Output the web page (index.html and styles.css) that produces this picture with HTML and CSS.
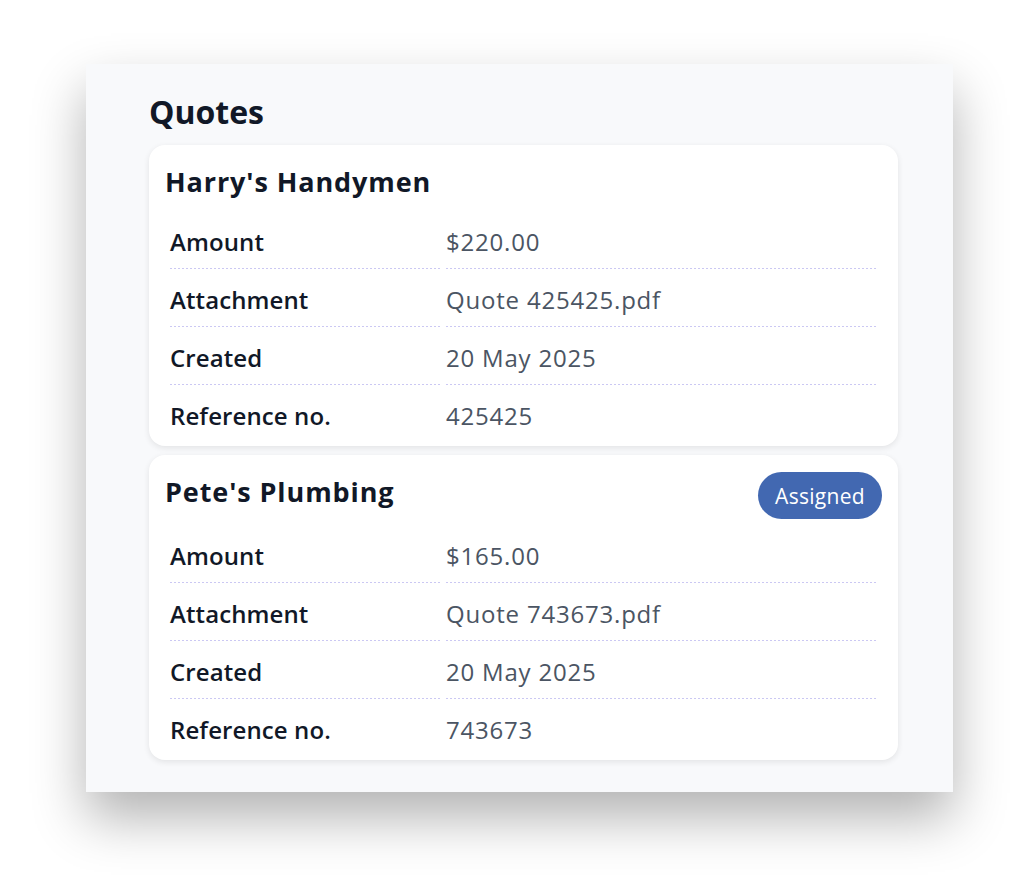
FILE: index.html
```
<!DOCTYPE html>
<html>
<head>
	<meta charset="utf-8">
	<title>Quotes</title>
	<link rel="stylesheet" href="styles.css">
</head>
<body>
	<div class="panel">
		<h2 class="page-title">Quotes</h2>
		<div class="quote-card">
			<div class="quote-head">
				<h3 class="quote-name">Harry's Handymen</h3>
			</div>
			<dl class="quote-rows">
				<dt>Amount</dt><dd>$220.00</dd>
				<dt>Attachment</dt><dd>Quote 425425.pdf</dd>
				<dt>Created</dt><dd>20 May 2025</dd>
				<dt class="last">Reference no.</dt><dd class="last">425425</dd>
			</dl>
		</div>
		<div class="quote-card">
			<div class="quote-head">
				<h3 class="quote-name">Pete's Plumbing</h3>
				<span class="badge">Assigned</span>
			</div>
			<dl class="quote-rows">
				<dt>Amount</dt><dd>$165.00</dd>
				<dt>Attachment</dt><dd>Quote 743673.pdf</dd>
				<dt>Created</dt><dd>20 May 2025</dd>
				<dt class="last">Reference no.</dt><dd class="last">743673</dd>
			</dl>
		</div>
	</div>
</body>
</html>
```

FILE: styles.css
```
*{margin: 0;padding: 0;box-sizing: border-box;}
html, body{ background: #fff; min-height: 879px; }
body{ padding: 64px 0 87px 86px; font-family: "Open Sans", "Liberation Sans", sans-serif; color: #111827; }
.panel{ width: 867px; height: 728px; padding: 28px 55px 0 63px; background: #f8f9fb; box-shadow: 0 26px 50px rgba(0,0,0,0.3); }
.page-title{ font-size: 32px; font-weight: 700; line-height: 40px; margin-bottom: 13px; color: #111827; }
.quote-card{ background: #fff; border-radius: 16px; padding: 0 16px 4px; margin-bottom: 9px; box-shadow: 0 2px 6px rgba(0,0,0,0.09); }
.quote-head{ display: flex; justify-content: space-between; align-items: flex-start; padding: 17px 0 6px; }
.quote-name{ font-size: 27px; font-weight: 700; line-height: 43px; margin: -2px 0 2px; letter-spacing: 0.9px; color: #111827; }
.badge{ display: flex; align-items: center; height: 47px; padding: 0 17px; border-radius: 24px; background: #4268b1; color: #fff; font-size: 21px; letter-spacing: 0.3px; }
.quote-rows{ display: grid; grid-template-columns: 272px 1fr; column-gap: 4px; margin: 0 4px 0 5px; }
.quote-rows dt, .quote-rows dd{ display: flex; align-items: center; height: 58px; padding-top: 3px; font-size: 24px;
	background: linear-gradient(to right, #cbc8f3 50%, transparent 50%) left bottom / 4px 1px repeat-x; }
.quote-rows dt{ font-weight: 600; color: #111827; letter-spacing: 0.1px; }
.quote-rows dd{ color: #4b5563; letter-spacing: 0.8px; }
.quote-rows .last{ background: none; height: 57px; }
```
